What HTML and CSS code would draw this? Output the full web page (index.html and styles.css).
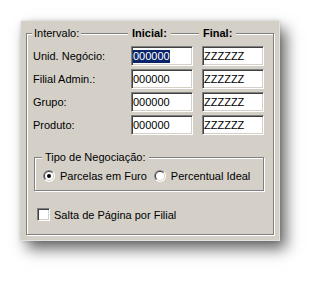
FILE: index.html
```html
<!DOCTYPE html>
<html>
<head>
<meta charset="utf-8">
<link rel="stylesheet" href="styles.css">
</head>
<body>
<div class="page">
<div class="panel">
  <div class="group">
    <div class="grid">
      <div class="legend legend-first">Intervalo:</div>
      <div class="legend legend-bold">Inicial:</div>
      <div class="legend legend-bold">Final:</div>

      <div class="label">Unid. Negócio:</div>
      <div class="field"><span class="sel">000000</span></div>
      <div class="field">ZZZZZZ</div>

      <div class="label">Filial Admin.:</div>
      <div class="field">000000</div>
      <div class="field">ZZZZZZ</div>

      <div class="label">Grupo:</div>
      <div class="field">000000</div>
      <div class="field">ZZZZZZ</div>

      <div class="label">Produto:</div>
      <div class="field">000000</div>
      <div class="field">ZZZZZZ</div>
    </div>

    <div class="subgroup">
      <div class="legend legend-sub">Tipo de Negociação:</div>
      <div class="radios">
        <div class="radio">
          <svg class="radio-icon" width="12" height="12" viewBox="0 0 12 12">
            <circle cx="6" cy="6" r="6" fill="#ffffff"/>
            <path d="M1.757 10.243 A6 6 0 0 1 10.243 1.757 Z" fill="#808080"/>
            <circle cx="6" cy="6" r="5" fill="#d4d0c8"/>
            <path d="M2.464 9.536 A5 5 0 0 1 9.536 2.464 Z" fill="#404040"/>
            <circle cx="6" cy="6" r="4" fill="#ffffff"/>
            <circle cx="6" cy="6" r="2" fill="#000000"/>
          </svg>
          <span>Parcelas em Furo</span>
        </div>
        <div class="radio">
          <svg class="radio-icon" width="12" height="12" viewBox="0 0 12 12">
            <circle cx="6" cy="6" r="6" fill="#ffffff"/>
            <path d="M1.757 10.243 A6 6 0 0 1 10.243 1.757 Z" fill="#808080"/>
            <circle cx="6" cy="6" r="5" fill="#d4d0c8"/>
            <path d="M2.464 9.536 A5 5 0 0 1 9.536 2.464 Z" fill="#404040"/>
            <circle cx="6" cy="6" r="4" fill="#ffffff"/>
          </svg>
          <span>Percentual Ideal</span>
        </div>
      </div>
    </div>

    <div class="check-row">
      <span class="checkbox"></span>
      <span>Salta de Página por Filial</span>
    </div>
  </div>
</div>
</div>
</body>
</html>
```

FILE: styles.css
```css
html, body {
  margin: 0;
  padding: 0;
  background: #ffffff;
}

body {
  font-family: "Liberation Sans", Arial, sans-serif;
  font-size: 11px;
  color: #000000;
}

.page {
  width: 322px;
  height: 284px;
  padding: 21px 0 0 21px;
  box-sizing: border-box;
}

.panel {
  width: 259px;
  height: 220px;
  box-sizing: border-box;
  padding: 12px 0 0 5px;
  background: #d4d0c8;
  box-shadow: inset -1px -1px 0 #e4e2dc, 0 0 4px rgba(0, 0, 0, 0.15), 6px 8px 14px rgba(0, 0, 0, 0.6);
}

.group {
  width: 248px;
  height: 202px;
  box-sizing: border-box;
  border: 1px solid #808080;
  box-shadow: inset 1px 1px 0 #ffffff, 1px 1px 0 #ffffff;
  padding: 0 0 0 6px;
}

.grid {
  display: grid;
  grid-template-columns: 89px 62px 62px;
  grid-auto-rows: 20px;
  grid-template-rows: 16px;
  column-gap: 9px;
  row-gap: 3px;
  margin-top: -7px;
}

.legend {
  justify-self: start;
  align-self: start;
  background: #d4d0c8;
  padding: 0 4px;
  margin-left: -3px;
  line-height: 13px;
  height: 13px;
  white-space: nowrap;
}

.legend-first {
  margin-left: -1px;
  padding: 0 2px;
}

.legend-bold {
  font-weight: bold;
}

.label {
  display: flex;
  align-items: center;
  white-space: nowrap;
}

.field {
  display: flex;
  align-items: center;
  box-sizing: border-box;
  height: 20px;
  background: #ffffff;
  border: 1px solid;
  border-color: #808080 #ffffff #ffffff #808080;
  box-shadow: inset 1px 1px 0 #404040, inset -1px -1px 0 #d4d0c8;
  padding-left: 1px;
  line-height: 13px;
  white-space: nowrap;
  overflow: hidden;
}

.sel {
  display: inline-block;
  background: #0a246a;
  color: #ffffff;
  line-height: 13px;
}

.subgroup {
  margin: 22px 0 0 1px;
  width: 230px;
  height: 34px;
  box-sizing: border-box;
  border: 1px solid #808080;
  box-shadow: inset 1px 1px 0 #ffffff, 1px 1px 0 #ffffff;
  padding-left: 0;
}

.legend-sub {
  display: block;
  width: max-content;
  margin: -7px 0 0 7px;
  padding: 0 3px;
}

.radios {
  display: flex;
  align-items: center;
  gap: 7px;
  margin: 5px 0 0 8px;
  height: 13px;
}

.radio {
  display: flex;
  align-items: center;
  gap: 5px;
  white-space: nowrap;
}

.radio-icon {
  display: block;
  flex: none;
}

.check-row {
  display: flex;
  align-items: center;
  gap: 4px;
  margin: 17px 0 0 4px;
  height: 13px;
  white-space: nowrap;
}

.checkbox {
  display: block;
  flex: none;
  width: 13px;
  height: 13px;
  box-sizing: border-box;
  background: #ffffff;
  border: 1px solid;
  border-color: #808080 #ffffff #ffffff #808080;
  box-shadow: inset 1px 1px 0 #404040, inset -1px -1px 0 #d4d0c8;
}
```
